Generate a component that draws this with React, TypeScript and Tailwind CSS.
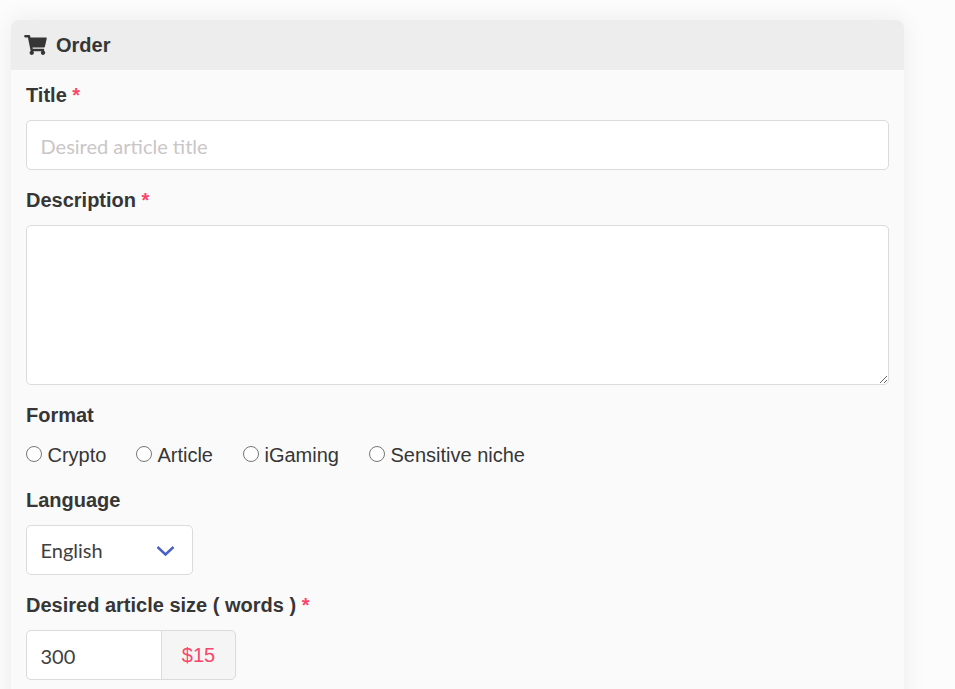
import { FaShoppingCart } from 'react-icons/fa';

const Required = () => <span className="text-[#f9466a] font-bold"> *</span>;

const formats = [
    { label: 'Crypto', cls: 'mr-[29.5px]' },
    { label: 'Article', cls: 'mr-[30px]' },
    { label: 'iGaming', cls: 'mr-[30px]' },
    { label: 'Sensitive niche', cls: '' },
];

const fieldCls =
    "h-[50px] border border-[#dbdbdb] bg-white text-[#404040] text-[20px] px-[13.5px] rounded-[5px] outline-none font-['Lato',sans-serif]";

export default function App() {
    return (
        <div className="h-[689px] overflow-hidden bg-[#fcfcfc] font-['Liberation_Sans',Arial,sans-serif] text-[#363636]">
            <div className="pt-5 pl-[11px]">
                <div className="w-[893px] h-[800px] rounded-t-[8px] bg-[#fafafa] shadow-[0_0_24px_rgba(0,0,0,0.07)]">
                    <div className="h-[50px] flex items-center gap-[9px] px-[13px] bg-[#ededed] rounded-t-[8px]">
                        <FaShoppingCart className="w-[23px] h-[20px] -mt-[1px]" />
                        <span className="text-[20px] font-bold">Order</span>
                    </div>
                    <div className="px-[15px] flex flex-col">
                        <label className="h-[50px] flex items-center text-[20px] font-bold whitespace-pre">
                            Title<Required />
                        </label>
                        <input className={`${fieldCls} pt-[1px] w-[863px] placeholder:text-[#cac6c6]`} placeholder="Desired article title" />
                        <label className="h-[55px] pt-[5px] flex items-center text-[20px] font-bold whitespace-pre">
                            Description<Required />
                        </label>
                        <textarea className={`${fieldCls} w-[863px] h-[160px] block`} />
                        <label className="h-[60px] flex items-center text-[20px] font-bold">Format</label>
                        <div className="h-[20px] flex items-center text-[20px]">
                            {formats.map((f) => (
                                <label key={f.label} className={`flex items-center gap-[5.5px] ${f.cls}`}>
                                    <input type="radio" name="format" className="w-[16px] h-[16px] m-0 -mt-[3px]" />
                                    {f.label}
                                </label>
                            ))}
                        </div>
                        <label className="h-[60px] pt-[10px] flex items-center text-[20px] font-bold">Language</label>
                        <div className="relative w-[167px]">
                            <select className={`${fieldCls} w-full appearance-none`} defaultValue="English">
                                <option>English</option>
                            </select>
                            <svg viewBox="0 0 18 12" className="absolute right-[18px] top-[20px] w-[18px] h-[12px] pointer-events-none" fill="none" stroke="#485fc7" strokeWidth="2.4">
                                <path d="M0.5 2 L8.5 9.5 L16.5 2" />
                            </svg>
                        </div>
                        <label className="h-[55px] pt-[5px] flex items-center text-[20px] font-bold whitespace-pre">
                            Desired article size ( words )<Required />
                        </label>
                        <div className="flex">
                            <input className={`${fieldCls} pt-[1px] w-[136px] rounded-r-none`} defaultValue="300" />
                            <div className="w-[75px] h-[50px] -ml-px flex items-center justify-center border border-[#dbdbdb] bg-[#f5f5f5] rounded-r-[5px] text-[20px] text-[#f9466a]">
                                $15
                            </div>
                        </div>
                    </div>
                </div>
            </div>
        </div>
    );
}
